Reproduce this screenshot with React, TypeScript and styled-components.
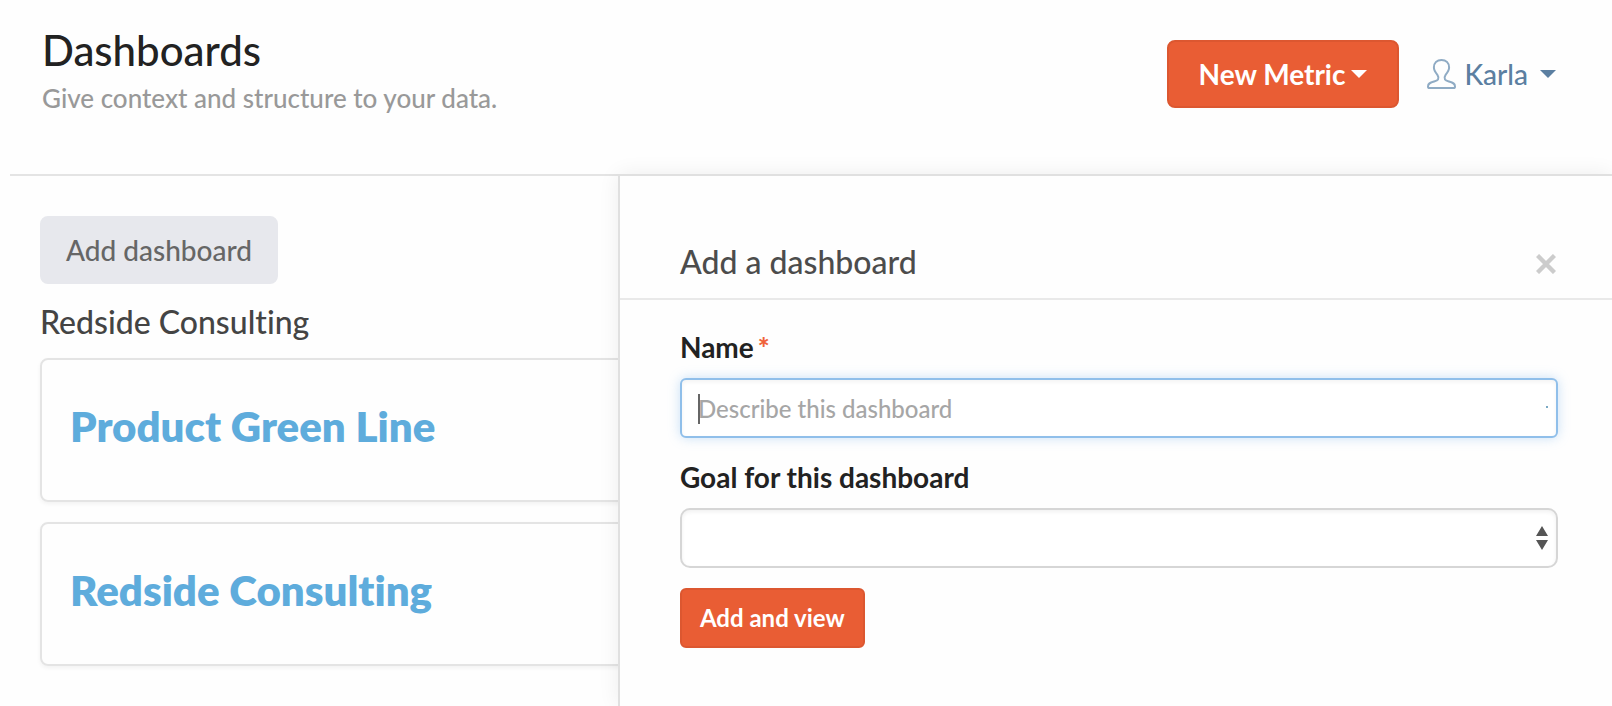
import React from "react";
import styled, { createGlobalStyle, css } from "styled-components";

const GlobalStyle = createGlobalStyle`
  *, *::before, *::after { box-sizing: border-box; }
  body {
    margin: 0;
    background: #fefefe;
    color: #222;
    font-family: Lato, "Liberation Sans", sans-serif;
    font-variant-ligatures: none;
  }
  button, input, select { font-family: inherit; margin: 0; }
  h1, h2, h3, p { margin: 0; }
`;

const Page = styled.div`
  display: flex;
  flex-direction: column;
  min-height: 100vh;
  padding-left: 10px;
  overflow: hidden;
`;

const Header = styled.header`
  display: flex;
  justify-content: space-between;
  align-items: flex-start;
  padding: 24px 56px 58px 32px;
  border-bottom: 2px solid #e4e4e4;
`;

const PageTitle = styled.h1`
  font-size: 42px;
  line-height: 52px;
  font-weight: 500;
  color: #222;
`;

const Subtitle = styled.p`
  margin-top: 4px;
  font-size: 26px;
  line-height: 36px;
  font-weight: 500;
  color: #999;
`;

const Actions = styled.div`
  display: flex;
  align-items: center;
  gap: 28px;
  padding-top: 16px;
`;

const Button = styled.button<{ $tone: "primary" | "plain"; $size: "large" | "small" }>`
  display: inline-flex;
  align-items: center;
  gap: 6px;
  border: 2px solid transparent;
  cursor: pointer;
  ${({ $size }) =>
    $size === "large"
      ? css`
          height: 68px;
          padding: 0 30px;
          border-radius: 8px;
          font-size: 28px;
        `
      : css`
          height: 60px;
          padding: 0 18px 2px;
          border-radius: 6px;
          font-size: 24px;
        `}
  ${({ $tone }) =>
    $tone === "primary"
      ? css`
          background: #e95d34;
          border-color: #dc5730;
          color: #fff;
          font-weight: 700;
        `
      : css`
          padding: 0 24px;
          background: #e7e8ed;
          border-color: #e7e8ed;
          color: #666;
          font-weight: 500;
        `}
`;

const UserMenu = styled.button`
  display: inline-flex;
  align-items: center;
  gap: 12px;
  padding: 0;
  border: 0;
  background: none;
  color: #5b7fa1;
  font-size: 28px;
  font-weight: 500;
  cursor: pointer;
`;

const UserName = styled.span`
  display: inline-flex;
  align-items: center;
  gap: 8px;
`;

const Caret = styled.span`
  border: 8px solid transparent;
  border-top-color: currentColor;
  border-bottom-width: 0;
`;

const Main = styled.main`
  position: relative;
  flex: 1;
  padding: 40px 30px;
`;

const SectionTitle = styled.h2`
  margin: 18px 0 16px;
  font-size: 32px;
  line-height: 40px;
  font-weight: 500;
  color: #444;
`;

const CardList = styled.div`
  display: flex;
  flex-direction: column;
  gap: 20px;
`;

const Card = styled.article`
  padding: 41px 28px 49px;
  border: 2px solid #e4e4e4;
  border-radius: 8px;
  box-shadow: 0 2px 4px rgba(0, 0, 0, 0.05);
`;

const CardLink = styled.a`
  display: block;
  font-size: 42px;
  line-height: 50px;
  font-weight: 800;
  color: #5eacdc;
  text-decoration: none;
`;

const Drawer = styled.aside`
  position: absolute;
  top: -2px;
  right: 0;
  bottom: 0;
  left: 37.95%;
  background: #fefefe;
  border: solid #e0e0e0;
  border-width: 2px 0 0 2px;
  box-shadow: 0 0 20px rgba(0, 0, 0, 0.07);
`;

const DrawerHeader = styled.div`
  display: flex;
  justify-content: space-between;
  align-items: center;
  padding: 66px 54px 16px 60px;
  border-bottom: 2px solid #e9e9e9;
`;

const DrawerTitle = styled.h2`
  font-size: 32px;
  line-height: 40px;
  font-weight: 500;
  color: #4c4c4c;
`;

const CloseButton = styled.button`
  display: flex;
  padding: 4px 2px 0;
  border: 0;
  background: none;
  cursor: pointer;
`;

const Form = styled.form`
  display: flex;
  flex-direction: column;
  align-items: flex-start;
  gap: 20px;
  padding: 28px 54px 56px 60px;
`;

const Field = styled.div`
  width: 100%;
`;

const Label = styled.label`
  display: block;
  margin-bottom: 12px;
  font-size: 28px;
  line-height: 38px;
  font-weight: 700;
  color: #222;
`;

const Required = styled.span`
  margin-left: 4px;
  font-weight: 900;
  color: #f0623a;
`;

const ControlWrap = styled.div`
  position: relative;
`;

const controlBase = css`
  display: block;
  width: 100%;
  height: 60px;
  padding: 0 16px;
  background: #fff;
  font-size: 24px;
  color: #444;
  outline: none;
`;

const TextInput = styled.input`
  ${controlBase}
  border: 2px solid #90bfea;
  border-radius: 6px;
  box-shadow: 0 0 12px rgba(120, 180, 235, 0.4), inset 0 2px 4px rgba(0, 0, 0, 0.05);
  &::placeholder {
    color: #a6a6a6;
    opacity: 1;
    font-weight: 500;
  }
`;

const TextCursor = styled.span`
  position: absolute;
  top: 16px;
  left: 18px;
  width: 2px;
  height: 30px;
  background: #666;
`;

const InputMark = styled.span`
  position: absolute;
  top: 28px;
  right: 10px;
  width: 2px;
  height: 2px;
  background: #7aa9c4;
`;

const Select = styled.select`
  ${controlBase}
  appearance: none;
  border: 2px solid #d6d6d6;
  border-radius: 10px;
  box-shadow: inset 0 2px 4px rgba(0, 0, 0, 0.06);
`;

const SelectArrows = styled.svg`
  position: absolute;
  top: 18px;
  right: 10px;
  pointer-events: none;
`;

const dashboards = ["Product Green Line", "Redside Consulting"];

function UserIcon() {
  return (
    <svg width="29" height="30" viewBox="0 0 29 30" fill="none" aria-hidden="true">
      <path
        d="M11 20.500c.9-1.700.6-3-.6-4.700C8.300 13.200 6.900 11.300 6.900 8.500 6.900 4 10 1 14.500 1s7.600 3 7.600 7.500c0 2.800-1.400 4.700-3.500 7.300-1.200 1.700-1.500 3-.6 4.700.6 1 2 1.400 4 2C26.200 23.800 28 24.700 28 27.400c0 1.100-.5 1.600-1.500 1.600h-24C1.500 29 1 28.500 1 27.400c0-2.700 1.800-3.600 6-4.900 2-.6 3.400-1 4-2z"
        stroke="#8fabc4"
        strokeWidth="2"
        strokeLinejoin="round"
      />
    </svg>
  );
}

function CloseIcon() {
  return (
    <svg width="20" height="20" viewBox="0 0 20 20" aria-hidden="true">
      <path d="M1.500 1.500l17 17M18.500 1.500l-17 17" stroke="#ccc" strokeWidth="4.400" />
    </svg>
  );
}

export default function App() {
  return (
    <>
      <GlobalStyle />
      <Page>
        <Header>
          <div>
            <PageTitle>Dashboards</PageTitle>
            <Subtitle>Give context and structure to your data.</Subtitle>
          </div>
          <Actions>
            <Button type="button" $tone="primary" $size="large">
              New Metric
              <Caret />
            </Button>
            <UserMenu type="button">
              <UserName>
                <UserIcon />
                Karla
              </UserName>
              <Caret />
            </UserMenu>
          </Actions>
        </Header>
        <Main>
          <Button type="button" $tone="plain" $size="large">
            Add dashboard
          </Button>
          <SectionTitle>Redside Consulting</SectionTitle>
          <CardList>
            {dashboards.map((name) => (
              <Card key={name}>
                <CardLink href="#">{name}</CardLink>
              </Card>
            ))}
          </CardList>
          <Drawer>
            <DrawerHeader>
              <DrawerTitle>Add a dashboard</DrawerTitle>
              <CloseButton type="button" aria-label="Close">
                <CloseIcon />
              </CloseButton>
            </DrawerHeader>
            <Form>
              <Field>
                <Label htmlFor="name">
                  Name
                  <Required>*</Required>
                </Label>
                <ControlWrap>
                  <TextInput id="name" type="text" placeholder="Describe this dashboard" required />
                  <TextCursor />
                  <InputMark />
                </ControlWrap>
              </Field>
              <Field>
                <Label htmlFor="goal">Goal for this dashboard</Label>
                <ControlWrap>
                  <Select id="goal" defaultValue="">
                    <option value="" />
                  </Select>
                  <SelectArrows width="12" height="24" viewBox="0 0 12 24" aria-hidden="true">
                    <path d="M6 0l6 10H0zM6 24l6-10H0z" fill="#555" />
                  </SelectArrows>
                </ControlWrap>
              </Field>
              <Button type="submit" $tone="primary" $size="small">
                Add and view
              </Button>
            </Form>
          </Drawer>
        </Main>
      </Page>
    </>
  );
}
